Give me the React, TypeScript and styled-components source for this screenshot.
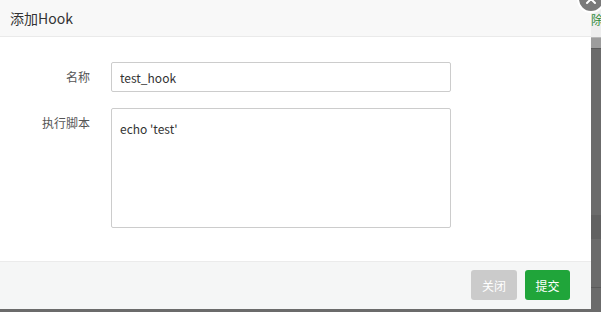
import React from "react";
import styled, { createGlobalStyle } from "styled-components";

const Global = createGlobalStyle`
  html, body { margin: 0; padding: 0; }
  body {
    font-family: "Microsoft YaHei", "Noto Sans CJK SC", "Noto Sans", sans-serif;
    background: #6b6b6b;
  }
`;

const Page = styled.div`
  position: relative;
  width: 601px;
  height: 312px;
  overflow: hidden;
  display: flex;
  align-items: flex-start;
  background: #6b6b6b;
`;

const Dialog = styled.div`
  width: 591px;
  height: 309px;
  background: #fff;
  display: flex;
  flex-direction: column;
  flex: none;
`;

const Header = styled.div`
  height: 36px;
  border-bottom: 1px solid #eaeaea;
  background: #f8f8f8;
  display: flex;
  align-items: center;
  padding-left: 10px;
  font-size: 14px;
  color: #333;
`;

const Body = styled.div`
  flex: 1;
  padding: 25px 0 0 0;
  display: flex;
  flex-direction: column;
  gap: 16px;
`;

const Row = styled.div`
  display: flex;
  align-items: flex-start;
`;

const Label = styled.label`
  width: 90px;
  text-align: right;
  padding-right: 21px;
  font-size: 12px;
  line-height: 30px;
  color: #555;
  flex: none;
`;

const TextInput = styled.input`
  box-sizing: border-box;
  width: 340px;
  height: 30px;
  border: 1px solid #ccc;
  border-radius: 2px;
  padding: 0 8px;
  font-family: inherit;
  font-size: 12px;
  color: #333;
  outline: none;
`;

const TextArea = styled.textarea`
  box-sizing: border-box;
  width: 340px;
  height: 120px;
  border: 1px solid #ccc;
  border-radius: 2px;
  padding: 10px 8px;
  font-family: inherit;
  font-size: 12px;
  line-height: 20px;
  color: #333;
  resize: none;
  outline: none;
`;

const Footer = styled.div`
  height: 47px;
  border-top: 1px solid #ebebeb;
  background: #f5f6f6;
  display: flex;
  justify-content: flex-end;
  align-items: flex-start;
  gap: 8px;
  padding: 8px 21px 0 0;
  box-sizing: border-box;
  height: 48px;
`;

const Button = styled.button<{ $variant: "muted" | "primary" }>`
  height: 30px;
  width: ${(p) => (p.$variant === "muted" ? "46px" : "45px")};
  border: none;
  border-radius: 3px;
  font-family: inherit;
  font-size: 12px;
  color: #fff;
  background: ${(p) => (p.$variant === "muted" ? "#cbcbcb" : "#20a53a")};
  padding: 0;
`;

const Strip = styled.div`
  flex: 1;
  height: 312px;
  display: flex;
  flex-direction: column;
  overflow: hidden;
`;

const StripTop = styled.div`
  height: 37px;
  background: #eeeeee;
  border-bottom: 1px solid #b8b8b8;
  font-size: 12px;
  color: #2e8b3a;
  line-height: 40px;
  white-space: nowrap;
`;

const StripBand = styled.div<{ $h: number; $bg: string; $line?: boolean }>`
  height: ${(p) => p.$h}px;
  background: ${(p) => p.$bg};
  border-bottom: ${(p) => (p.$line ? "1px solid #5a5a5a" : "none")};
  flex: none;
`;

const Close = styled.div`
  position: absolute;
  left: 577px;
  top: -15px;
  width: 24px;
  height: 24px;
  border-radius: 50%;
  background: #7a7a7a;
  border: 2px solid #fff;
  display: flex;
  align-items: center;
  justify-content: center;
`;

export default function App() {
  return (
    <>
      <Global />
      <Page>
        <Dialog>
          <Header>添加Hook</Header>
          <Body>
            <Row>
              <Label>名称</Label>
              <TextInput defaultValue="test_hook" />
            </Row>
            <Row>
              <Label>执行脚本</Label>
              <TextArea defaultValue="echo 'test'" />
            </Row>
          </Body>
          <Footer>
            <Button $variant="muted">关闭</Button>
            <Button $variant="primary">提交</Button>
          </Footer>
        </Dialog>
        <Strip>
          <StripTop>除</StripTop>
          <StripBand $h={10} $bg="#9d9d9d" $line />
          <StripBand $h={166} $bg="#6b6b6b" />
          <StripBand $h={24} $bg="#616161" />
          <StripBand $h={48} $bg="#6b6b6b" $line />
          <StripBand $h={30} $bg="#6b6b6b" />
        </Strip>
        <Close>
          <svg width="14" height="14" viewBox="0 0 14 14">
            <path d="M3 3 L11 11 M11 3 L3 11" stroke="#fff" strokeWidth="2" strokeLinecap="round" />
          </svg>
        </Close>
      </Page>
    </>
  );
}
